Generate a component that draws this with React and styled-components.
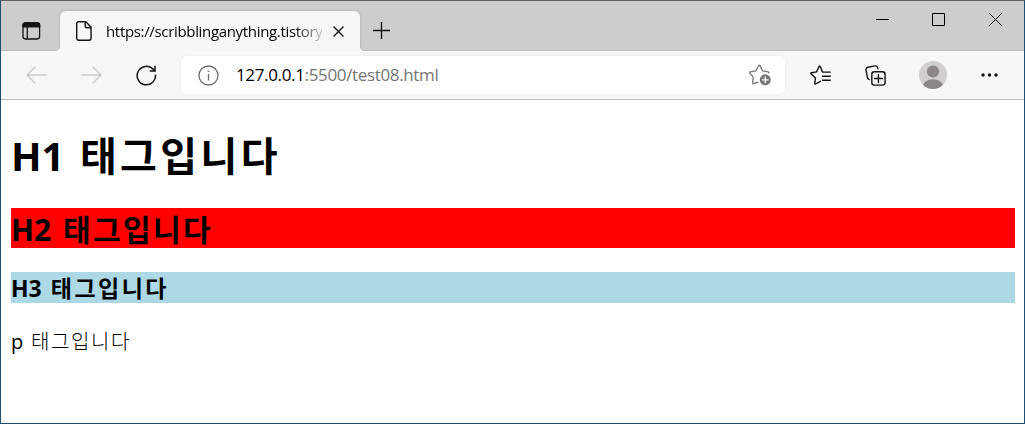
import styled, { createGlobalStyle } from 'styled-components';


export default function App() {

    return (
        <>
        <GlobalStyle />
        <Window>
            <TabStrip>
                <TabActions>
                    <svg width="20" height="20" viewBox="0 0 20 20" fill="none" stroke="#111" strokeWidth="1.3">
                        <rect x="2" y="2" width="16.6" height="16" rx="2.4" />
                        <path d="M2 5.8V4.200a2.200 2.200 0 0 1 2.200-2.200h12.200a2.200 2.200 0 0 1 2.200 2.200v1.600z" fill="#111" />
                        <path d="M6.300 6v12" />
                    </svg>
                </TabActions>

                <Tab>
                    <svg width="16" height="20" viewBox="0 0 16 20" fill="none" stroke="#111" strokeWidth="1.4" strokeLinejoin="round">
                        <path d="M2.700.7h7l5.300 5.300v11.300a2 2 0 0 1-2 2H2.700a2 2 0 0 1-2-2V2.700a2 2 0 0 1 2-2z" />
                        <path d="M9.200.9v4.300a1.500 1.500 0 0 0 1.500 1.500h4.300" />
                    </svg>
                    <TabTitle>https://scribblinganything.tistory</TabTitle>
                    <svg width="11" height="11" viewBox="0 0 11 11" fill="none" stroke="#111" strokeWidth="1.4">
                        <path d="M.5.5l10 10M10.500.5l-10 10" />
                    </svg>
                </Tab>

                <NewTab>
                    <svg width="17" height="17" viewBox="0 0 17 17" fill="none" stroke="#111" strokeWidth="1.3">
                        <path d="M8.500 0v17M0 8.500h17" />
                    </svg>
                </NewTab>

                <WindowControls>
                    <svg width="13" height="13" viewBox="0 0 13 13" stroke="#000"><path d="M0 6.500h13" /></svg>
                    <svg width="13" height="13" viewBox="0 0 13 13" fill="none" stroke="#000"><path d="M.5.5h12v12H.5z" /></svg>
                    <svg width="13" height="13" viewBox="0 0 13 13" fill="none" stroke="#000"><path d="M.3.3l12.400 12.400M12.700.3L.3 12.700" /></svg>
                </WindowControls>
            </TabStrip>

            <Toolbar>
                <NavButtons>
                    <svg width="21" height="18" viewBox="0 0 21 18" fill="none" stroke="#c8c8c8" strokeWidth="1.300">
                        <path d="M9.500.5L1 9l8.500 8.500M1 9h19.500" />
                    </svg>
                    <svg width="21" height="18" viewBox="0 0 21 18" fill="none" stroke="#c8c8c8" strokeWidth="1.300">
                        <path d="M11.500.5L20 9l-8.500 8.500M20 9H.5" />
                    </svg>
                    <svg width="21" height="21" viewBox="0 0 21 21" fill="none" stroke="#111" strokeWidth="1.500">
                        <path d="M19.500 9.500a9.200 9.200 0 1 1-3.400-6.100L19 5.800" />
                        <path d="M19 .8v5.200h-5.200" />
                    </svg>
                </NavButtons>

                <AddressBar>
                    <svg width="21" height="21" viewBox="0 0 21 21" fill="none" stroke="#6e6e6e" strokeWidth="1.300">
                        <circle cx="10.500" cy="10.500" r="9.500" />
                        <path d="M10.500 9v6.500" />
                        <circle cx="10.500" cy="6.300" r=".9" fill="#6e6e6e" stroke="none" />
                    </svg>
                    <Url><b>127.0.0.1</b>:5500/test08.html</Url>
                    <svg width="23" height="22" viewBox="0 0 23 22" fill="none" stroke="#777" strokeWidth="1.300" strokeLinejoin="round" strokeLinecap="round">
                        <path d="M9 18.200l-4.500 1.500c-.6.200-1-.2-.9-.8l.6-5.800-3.500-4.200c-.3-.5-.2-.9.300-1l5.700-1.100L9.900 1.400c.2-.5.7-.5 1 0L13.500 6.800l5.800 1.100c.6.100.7.600.3 1" />
                        <circle cx="16.300" cy="15.800" r="5.500" fill="#777" stroke="none" />
                        <path d="M16.300 13v5.600M13.500 15.800h5.600" stroke="#fff" />
                    </svg>
                </AddressBar>

                <Actions>
                    <svg width="21" height="20" viewBox="0 0 21 20" fill="none" stroke="#111" strokeWidth="1.400" strokeLinejoin="round" strokeLinecap="round">
                        <path d="M10.500 16.300l-5 2.700c-.5.200-.9-.1-.8-.6l.8-5.400L1 8.700c-.3-.5-.2-.9.400-1l5.100-.8 2.600-5.400c.3-.6.800-.6 1.100 0l2.300 5.600h7.800" />
                        <path d="M12.500 11.200h7.800M12.500 15.300h7.800" />
                    </svg>
                    <svg width="21" height="21" viewBox="0 0 21 21" fill="none" stroke="#111" strokeWidth="1.400" strokeLinecap="round">
                        <path d="M4.200 14.600a3 3 0 0 1-1.800-2.200L1 5.200a2.500 2.500 0 0 1 2-3L9.700.9a2.500 2.500 0 0 1 3 2l.2.800" />
                        <rect x="6.800" y="6.800" width="13.300" height="13.300" rx="2.600" />
                        <path d="M13.450 9.500v8M9.450 13.500h8" />
                    </svg>
                    <svg width="28" height="28" viewBox="0 0 28 28" fill="#8c8784">
                        <clipPath id="avatar"><circle cx="14" cy="14" r="14" /></clipPath>
                        <circle cx="14" cy="14" r="14" fill="#d1cfcb" />
                        <circle cx="14" cy="10.500" r="6.100" />
                        <ellipse cx="14" cy="25.500" rx="10.200" ry="7.200" clipPath="url(#avatar)" />
                    </svg>
                    <svg width="17" height="4" viewBox="0 0 17 4" fill="#111">
                        <circle cx="2" cy="2" r="1.700" />
                        <circle cx="8.500" cy="2" r="1.700" />
                        <circle cx="15" cy="2" r="1.700" />
                    </svg>
                </Actions>
            </Toolbar>

            <Page>
                <H1>H1 <span>태그입니다</span></H1>
                <H2>H2 <span>태그입니다</span></H2>
                <H3>H3 <span>태그입니다</span></H3>
                <P>p <span>태그입니다</span></P>
            </Page>
        </Window>
        </>
    );
}


const GlobalStyle = createGlobalStyle`
* {
    box-sizing: border-box;
}

body {
    margin: 0;
    font-family: "Open Sans", "Noto Sans CJK KR", sans-serif;
}

svg {
    display: block;
    flex-shrink: 0;
}
`;

const Window = styled.div`
width: 1025px;
height: 424px;
display: flex;
flex-direction: column;
background-color: #fff;
border: 1px solid #1b4f72;
border-top-color: #636363;
overflow: hidden;
`;

const TabStrip = styled.div`
height: 50px;
flex-shrink: 0;
display: flex;
background-color: #cdcdcd;
box-shadow: inset 0 -1px 0 #bfbfbf;
`;

const TabActions = styled.div`
width: 59px;
padding: 20px 0 0 20px;
`;

const Tab = styled.div`
position: relative;
width: 300px;
height: 40px;
margin-top: 10px;
padding: 0 16px;
display: flex;
align-items: center;
background-color: #f7f7f7;
border-radius: 6px 6px 0 0;
box-shadow: 0 0 3px rgba(0, 0, 0, 0.2);
clip-path: inset(-4px -4px 0 -4px);

    &::before, &::after{
        content: "";
        position: absolute;
        bottom: 0;
        width: 4px;
        height: 4px;
    }

    &::before{
        left: -4px;
        background: radial-gradient(circle at 0 0, transparent 3.5px, #f7f7f7 4px);
    }

    &::after{
        right: -4px;
        background: radial-gradient(circle at 100% 0, transparent 3.5px, #f7f7f7 4px);
    }
`;

const TabTitle = styled.div`
width: 218px;
margin: 0 11px 0 14px;
overflow: hidden;
white-space: nowrap;
font-size: 15px;
line-height: 20px;
letter-spacing: -0.33px;
color: #000;
mask-image: linear-gradient(to right, #000 188px, transparent 222px);
`;

const NewTab = styled.div`
padding: 21px 0 0 13px;
`;

const WindowControls = styled.div`
margin-left: auto;
padding: 12px 22px 0 0;
display: flex;
gap: 44px;

    svg:first-child{
        margin-right: -1px;
    }
`;

const Toolbar = styled.div`
height: 49px;
flex-shrink: 0;
display: flex;
align-items: center;
background-color: #f7f7f7;
border-bottom: 1px solid #bdbdbd;
`;

const NavButtons = styled.div`
width: 180px;
padding-left: 25px;
display: flex;
align-items: center;
gap: 34px;
`;

const AddressBar = styled.div`
width: 604px;
height: 38px;
padding: 0 13px 0 17px;
display: flex;
align-items: center;
background-color: #fff;
border-radius: 5px;
box-shadow: 0 0 4px rgba(0, 0, 0, 0.06);
`;

const Url = styled.div`
flex: 1;
margin-left: 17px;
font-size: 17px;
line-height: 24px;
letter-spacing: -0.35px;
color: #767676;

    b{
        font-weight: 400;
        color: #000;
    }
`;

const Actions = styled.div`
flex: 1;
padding: 0 26px 0 25px;
display: flex;
align-items: center;
justify-content: space-between;
`;

const Page = styled.div`
padding: 0 9px 0 10px;
color: #000;

    h1, h2, h3, p{
        margin: 0;
        white-space: nowrap;
    }

    h1, h2, h3{
        font-weight: 700;
    }

    span{
        font-family: "Noto Sans CJK KR", sans-serif;
    }
`;

const H1 = styled.h1`
height: 55px;
font-size: 40px;
line-height: 54px;
padding-top: 27px;
box-sizing: content-box;
word-spacing: 5px;

    span{
        letter-spacing: 3.4px;
    }
`;

const H2 = styled.h2`
height: 40px;
font-size: 30px;
line-height: 40px;
background-color: #f00;
word-spacing: 4px;

    && {
        margin-top: 26px;
    }

    span{
        letter-spacing: 2.4px;
    }
`;

const H3 = styled.h3`
height: 31px;
font-size: 23px;
line-height: 30px;
background-color: #add8e6;
word-spacing: 3px;

    && {
        margin-top: 24px;
    }

    span{
        letter-spacing: 2.5px;
    }
`;

const P = styled.p`
height: 27px;
font-size: 20px;
line-height: 27px;
word-spacing: 2.6px;

    && {
        margin-top: 24px;
    }

    span{
        font-weight: 300;
        letter-spacing: 1.6px;
    }
`;
